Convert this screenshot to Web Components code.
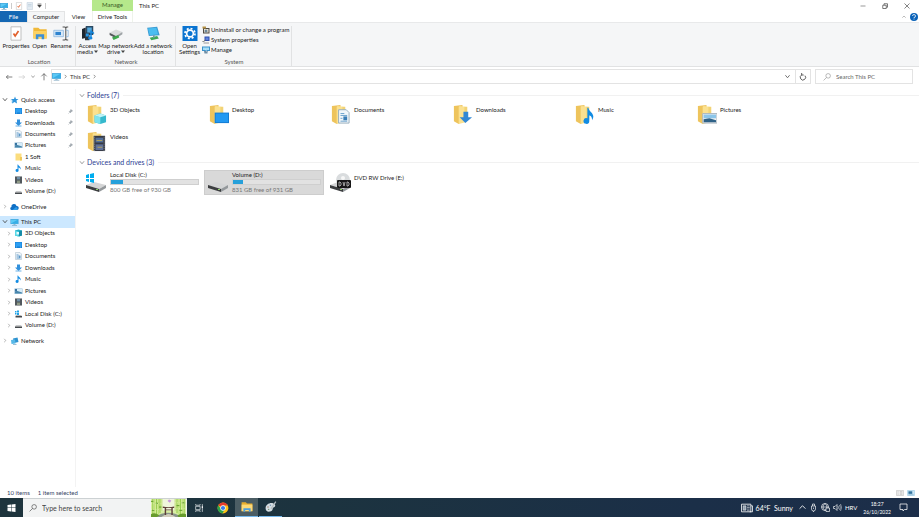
<!DOCTYPE html>
<html lang="en">
<head>
<meta charset="utf-8">
<title>This PC</title>
<style>
html,body{margin:0;height:100%}
body{font:6px/8px Lato,"Open Sans",sans-serif;color:#222;background:#fff}
</style>
</head>
<body>
<explorer-app></explorer-app>
<script>
const folder='<path d="M2 2L11 1V18L7 21L2 18Z" fill="#eec45c"/><path d="M8 2L14 3V19L7 21V3Z" fill="#fbe190"/><path d="M13 3H16V16L13 19Z" fill="#f2d375"/>';
const disk='<path d="M1 13L9 10L21 13L14 17Z" fill="#d4d5d6"/><path d="M1 13L14 17V20L1 16Z" fill="#3c3e40"/><path d="M14 17L21 13V16L14 20Z" fill="#94989b"/><rect x="11" y="17" width="2" height="1" fill="#8ecf6a"/>';
const ICONS={
 pc:[16,16,'<path d="M0 2H16V12H0Z" fill="#3d9bd4"/><path d="M1 3H15V11H1Z" fill="#5cc9f5"/><path d="M1 11L15 3V11Z" fill="#37aee6"/><path d="M6 12H10V14H6Z" fill="#8fb6cc"/><path d="M3 14H13V15H3Z" fill="#5b8fb0"/>'],
 check:[16,18,'<path d="M2 1H14V17H2Z" fill="#fff" stroke="#b5b5b5"/><path d="M5 9L7 12L11 6" fill="none" stroke="#e2612d" stroke-width="2"/>'],
 doc:[16,16,'<path d="M2 1H11L14 4V15H2Z" fill="#eef4f9" stroke="#9db4c5"/><path d="M4 5H8M4 7H12M4 9H7M4 11H7M4 13H12" stroke="#5f9bcb"/><path d="M8 8H12V12H8Z" fill="#5a96c5"/>'],
 sheet:[16,16,'<path d="M2 1H13V15H2Z" fill="#e3ebf2" stroke="#bccbd8"/><path d="M4 5H11M4 8H11" stroke="#aac0d2"/>'],
 openf:[18,18,'<path d="M1 2H7L9 4H17V15H1Z" fill="#f0b93a"/><path d="M1 6H17V15H1Z" fill="#fcd264"/><path d="M4 16V10H14V16H11V13H7V16Z" fill="#3b8fd8"/>'],
 rename:[20,18,'<path d="M1 5H13V13H1Z" fill="#d8e9f8" stroke="#8ab6de"/><path d="M3 7H10V11H3Z" fill="#2e83cf"/><path d="M12 1H15L16 2L17 1H19M16 2V16M12 17H15L16 16L17 17H19" fill="none" stroke="#555" stroke-width="1.300"/><path d="M16 5H19V13H16" fill="none" stroke="#8ab6de"/>'],
 media:[18,20,'<path d="M6 0H16V12H6Z" fill="#2b4a63"/><path d="M8 2H14V9H8Z" fill="#54a9de"/><path d="M1 4L6 2V16L1 17Z" fill="#1e2730"/><path d="M5 9H11V19H5Z" fill="#303940"/><path d="M6 10H10V14H6Z" fill="#2699ea"/><path d="M13 6V16" stroke="#1487df" stroke-width="2"/><ellipse cx="12" cy="16" rx="3" ry="2" fill="#1487df"/><path d="M13 7L17 10" stroke="#1487df" stroke-width="2"/>'],
 mapdrive:[20,18,'<path d="M2 8L10 4L18 7L10 12Z" fill="#d9dbdc"/><path d="M2 8L10 12V15L2 11Z" fill="#54585b"/><path d="M10 12L18 7V10L10 15Z" fill="#9da2a5"/><path d="M5 14L13 11L14 14L7 17Z" fill="#3da74c"/>'],
 addnet:[18,18,'<path d="M2 2L14 1L17 11L4 12Z" fill="#3a9bd2"/><path d="M3 3L13 2L15 10L5 11Z" fill="#4abdf0"/><path d="M5 14L14 12L16 15L7 17Z" fill="#3da757"/><path d="M10 11V14" stroke="#7598a7" stroke-width="2"/>'],
 gear:[18,18,'<path d="M0 0H18V18H0Z" fill="#0a74d1"/><circle cx="9" cy="9" r="4" fill="none" stroke="#fff" stroke-width="2"/><circle cx="9" cy="9" r="6" fill="none" stroke="#fff" stroke-width="2" stroke-dasharray="2.400 2.300"/>'],
 uninstall:[16,16,'<path d="M2 4H15V15H2Z" fill="#4f4a43"/><path d="M4 6H13V13H4Z" fill="#e8e3d5"/><circle cx="8" cy="10" r="3" fill="#6d8696"/><path d="M1 1H8V5H1Z" fill="#b69345"/>'],
 sysprop:[16,16,'<path d="M5 1H15V10H5Z" fill="#2b4fae"/><path d="M7 3H13V8H7Z" fill="#5d80df"/><path d="M3 13H14V15H3Z" fill="#999"/><path d="M1 10L3 12L7 7" stroke="#777" stroke-width="2" fill="none"/>'],
 manage:[16,16,'<path d="M0 1H16V10H0Z" fill="#3b91ca"/><path d="M2 3H14V8H2Z" fill="#a4dcf7"/><path d="M4 10H12L11 15H5Z" fill="#6f8ea5"/><path d="M7 7L11 13" stroke="#fff"/>'],
 star:[16,16,'<path d="M9 1L11 6L16 6L12 9L13 15L8 12L3 15L4 9L1 6L7 6Z" fill="#2c93dc"/><path d="M0 8H4M1 12H4" stroke="#73bced"/>'],
 desktop:[16,16,'<path d="M1 2H15V14H1Z" fill="#1681d8"/><path d="M2 3H14V11H2Z" fill="#2d9ff3"/><path d="M3 12H5M11 12H13" stroke="#a7d8fb"/>'],
 download:[16,16,'<path d="M5 1H11V7H15L8 14L1 7H5Z" fill="#3190dc"/><path d="M2 13H14V15H2Z" fill="#68b0e6"/>'],
 picture:[16,16,'<path d="M0 3H16V14H0Z" fill="#8db3cf"/><path d="M1 4H15V13H1Z" fill="#d6ecf8"/><path d="M1 9L6 8L15 11V13H1Z" fill="#4785ab"/><path d="M1 4H5V9H1Z" fill="#3773a0"/>'],
 soft:[16,16,'<path d="M2 1H14V15H2Z" fill="#fbdd7e"/><path d="M11 8H15V15H11Z" fill="#efc759"/>'],
 music:[16,16,'<path d="M7 1C8 5 14 5 12 11C11 8 9 7 8 7V12A3 3 0 1 1 6 10V1Z" fill="#128ce3"/>'],
 video:[16,16,'<path d="M1 1H15V15H1Z" fill="#42484e"/><path d="M5 2H11V7H5Z" fill="#6f8fa6"/><path d="M5 9H11V14H5Z" fill="#8f9a86"/><path d="M3 2V14M13 2V14" stroke="#c4c8cc" stroke-dasharray="1 1"/>'],
 drive:[16,16,'<path d="M3 8H13L15 11H1Z" fill="#c7c9ca"/><path d="M1 11H15V14H1Z" fill="#45494c"/>'],
 windrive:[16,16,'<path d="M1 2H4V5H1ZM5 1H9V5H5ZM1 6H4V9H1ZM5 6H9V10H5Z" fill="#1fa3e8"/><path d="M3 10H13L15 12H2Z" fill="#bbb"/><path d="M2 12H15V15H2Z" fill="#45494c"/>'],
 cloud:[16,16,'<path d="M3 14A3 3 0 0 1 2 8A5 5 0 0 1 12 6A4 4 0 0 1 13 14Z" fill="#0f6fc5"/><path d="M4 14L11 8A4 4 0 0 1 13 14Z" fill="#2c9be8"/>'],
 cube:[16,16,'<path d="M1 3L8 1L15 3V13L8 15L1 13Z" fill="#25b0c8"/><path d="M1 3L8 5V15L1 13Z" fill="#58d8e6"/><path d="M4 6H9V11H4Z" fill="#e6fbfd"/><path d="M9 5L15 3V13L9 15Z" fill="#168ba8"/>'],
 network:[16,16,'<path d="M5 3L14 1L16 10L7 12Z" fill="#2f93d0"/><path d="M1 6L9 5L10 13L2 14Z" fill="#58b9e8"/><path d="M5 14H12V15H5Z" fill="#3d7fa8"/>'],
 f3d:[22,22,folder+'<path d="M9 12L15 10L21 12V19L15 21L9 19Z" fill="#36b9cd"/><path d="M9 12L15 14V21L9 19Z" fill="#7fe3ee"/><path d="M9 12L15 10L21 12L15 14Z" fill="#bff3f6"/>'],
 fdesktop:[22,22,folder+'<path d="M7 9H22V20H7Z" fill="#147cd3"/><path d="M8 10H21V19H8Z" fill="#2299f2"/>'],
 fdoc:[22,22,folder+'<path d="M9 6H17L20 9V20H9Z" fill="#f1f6fa" stroke="#96adbd"/><path d="M11 10H15M11 12H18M11 18H18M11 15H13" stroke="#6aa1cc"/><path d="M14 13H18V17H14Z" fill="#3b7eb6"/>'],
 fdown:[22,22,folder+'<path d="M12 8H17V14H21L14 20L8 14H12Z" fill="#3187d4"/>'],
 fmusic:[22,22,folder+'<path d="M15 4C16 9 23 10 19 17C19 13 17 12 16 12V18A3 3 0 1 1 14 15V4Z" fill="#128ce3"/>'],
 fpic:[22,22,folder+'<path d="M7 10H22V20H7Z" fill="#f0f2f3" stroke="#aab5bd"/><path d="M8 11H21V15H8Z" fill="#8cc5e9"/><path d="M8 16L14 15L21 17V19H8Z" fill="#2f6288"/>'],
 fvideo:[22,22,folder+'<path d="M8 5H20V21H8Z" fill="#363a44"/><path d="M10 7H18V12H10Z" fill="#526f9a"/><path d="M10 14H18V20H10Z" fill="#5f719a"/><path d="M11 10H17M12 17H17" stroke="#b5a45c"/><path d="M9 6V21M19 6V21" stroke="#8b9099" stroke-dasharray="1 1"/>'],
 dwin:[22,22,disk+'<path d="M1 3L4 2V6H1ZM5 2L9 1V6H5ZM1 7H4V10L1 9ZM5 7H9V11L5 10Z" fill="#00adef"/>'],
 disk:[22,22,disk],
 dvd:[22,22,'<circle cx="14" cy="8" r="7" fill="#d9dcde"/><circle cx="14" cy="6" r="2" fill="#f7f7f7"/>'+disk+'<rect x="8" y="8" width="14" height="8" rx="1" fill="#171717"/><path d="M10 10V14H11L12 13V11L11 10ZM14 10L15 14L16 10M18 10V14H19L20 13V11L19 10Z" fill="none" stroke="#ddd" stroke-width=".7"/>'],
 back:[12,12,'<path d="M11 6H2M5 3L2 6L5 9" fill="none" stroke="#444"/>'],
 fwd:[12,12,'<path d="M1 6H10M7 3L10 6L7 9" fill="none" stroke="#c5c5c5"/>'],
 up:[12,12,'<path d="M6 11V1M2 5L6 1L10 5" fill="none" stroke="#444"/>'],
 down:[12,12,'<path d="M1 3L6 9L11 3" fill="none" stroke="currentColor" stroke-width="2"/>'],
 right:[12,12,'<path d="M4 2L8 6L4 10" fill="none" stroke="currentColor" stroke-width="1.500"/>'],
 chup:[12,12,'<path d="M1 8L6 3L11 8" fill="none" stroke="currentColor" stroke-width="1.500"/>'],
 refresh:[12,12,'<path d="M4 3A4 4 0 1 0 9 4M4 0V3H7" fill="none" stroke="#444" stroke-width="1.300"/>'],
 search:[14,14,'<circle cx="9" cy="5" r="4" fill="none" stroke="currentColor"/><path d="M6 8L1 13" stroke="currentColor"/>'],
 pin:[12,12,'<path d="M7 1L11 5L8 6L6 9L3 6L6 4Z" fill="#a5adb3" stroke="#7c858c"/><path d="M4 8L1 11" stroke="#7c858c"/>'],
 caret:[8,8,'<path d="M0 1H8L4 6Z" fill="#444"/>'],
 qcaret:[8,8,'<path d="M1 0H7M1 3H7L4 7Z" fill="#444" stroke="#444"/>'],
 min:[12,12,'<path d="M1 6H11" stroke="#333"/>'],
 max:[12,12,'<path d="M1.500 4.500H8.500V11H1.500ZM4 4V1.500H11V8.500H9" fill="none" stroke="#333" stroke-width="1.300"/>'],
 close:[12,12,'<path d="M1 1L11 11M11 1L1 11" stroke="#333" stroke-width="1.200"/>'],
 help:[16,16,'<circle cx="8" cy="8" r="8" fill="#0b63b8"/><path d="M5 6A3 3 0 1 1 8 9V10M8 11V13" fill="none" stroke="#fff" stroke-width="1.500"/>'],
 win:[16,16,'<path d="M0 2L7 1V7H0ZM8 1L16 0V7H8ZM0 8H7V15L0 14ZM8 8H16V16L8 15Z" fill="#fff"/>'],
 taskview:[18,18,'<path d="M3 6H11V12H3ZM3 2V4H11V2M3 16V14H11V16M15 2V16" fill="none" stroke="#e5eaec" stroke-width="1.300"/><path d="M14 6H16V9H14Z" fill="#fff"/>'],
 chrome:[20,20,'<circle cx="10" cy="10" r="9" fill="#fbc116"/><path d="M10 10L2 5.500A9 9 0 0 1 18 6H10Z" fill="#e53a2e"/><path d="M2 5.500A9 9 0 0 0 9 19L13 12L10 10L7 12Z" fill="#2ba24c"/><circle cx="10" cy="10" r="4.500" fill="#fff"/><circle cx="10" cy="10" r="3.500" fill="#3b7ded"/>'],
 explorer:[20,18,'<path d="M1 1H8L10 3H19V16H1Z" fill="#e9ad2c"/><path d="M1 5H19V16H1Z" fill="#fdd977"/><path d="M4 17V11H16V17H13V14H7V17Z" fill="#4f9fdd"/>'],
 paint:[20,20,'<path d="M1 12C1 6 8 2 14 4C19 6 17 10 14 11C12 12 14 15 10 17C5 19 1 17 1 12Z" fill="#d3dde2"/><circle cx="5" cy="10" r="1.200" fill="#a8806f"/><circle cx="9" cy="7" r="1.200" fill="#7495b5"/><circle cx="6" cy="14" r="1.200" fill="#77957a"/><path d="M18 1L10 13" stroke="#b3bcc1" stroke-width="2"/>'],
 news:[22,18,'<path d="M1 2H18V16H1ZM18 5H21V16H16" fill="none" stroke="#fff" stroke-width="1.500"/><path d="M4 5H9V13H4Z" fill="#91a0ae"/><path d="M11 5H16M11 8H16M11 11H16M11 14H16M4 5H9V13H4Z" fill="none" stroke="#fff"/>'],
 usb:[14,18,'<path d="M3 6H11V12A4 4 0 0 1 3 12ZM5 6V2H9V6M7 9V12M7 16V18" fill="none" stroke="#fff" stroke-width="1.300"/>'],
 globe:[18,18,'<circle cx="8" cy="8" r="7" fill="none" stroke="#fff" stroke-width="1.400"/><path d="M1 8H15M8 1C3 5 3 11 8 15C13 11 13 5 8 1" fill="none" stroke="#fff" stroke-width="1.200"/><path d="M10 10H17V17H10Z" fill="#1d3049" stroke="#fff" stroke-width="1.300"/>'],
 sound:[18,16,'<path d="M1 6H4L8 2V14L4 10H1Z" fill="none" stroke="#fff" stroke-width="1.300"/><path d="M10 5Q12 8 10 11M13 3Q16 8 13 13M15 1Q19 8 15 15" fill="none" stroke="#fff"/>'],
 note:[18,18,'<path d="M2 2H16V13H11L8 16V13H2Z" fill="none" stroke="#fff" stroke-width="1.500"/>'],
 details:[18,14,'<path d="M1 1H17V13H1Z" fill="#fff" stroke="#999"/><path d="M3 4H6M3 7H6M3 10H6M8 4H15M8 7H15M8 10H15" stroke="#777"/>'],
 tiles:[18,14,'<path d="M1 1H17V13H1Z" fill="#cfe8f7" stroke="#74b5dc"/><path d="M3 3H12V9H3Z" fill="#32749f"/><path d="M3 11H15" stroke="#4a86ac"/>'],
 garden:[74,38,'<path d="M0 0H74V38H0Z" fill="#d9efa4"/><path d="M22 0H52V24H22Z" fill="#eff5dc"/><path d="M4 0V38M12 0V34M19 0V30M55 0V30M62 0V34M70 0V38" stroke="#8cc63a" stroke-width="2"/><path d="M8 0V38M16 0V33M23 0V25M51 0V25M59 0V33M66 0V38" stroke="#b9dd6b" stroke-width="2"/><path d="M0 5H5M10 9H15M17 17H22M54 14H60M65 8H72M2 24H7M60 24H66" stroke="#5f9a28" stroke-width="2"/><path d="M0 10H30M45 8H74M0 22H20M54 20H74" stroke="#f2fad2" stroke-dasharray="2 3"/><path d="M8 38Q36 20 66 38Z" fill="#89958a"/><path d="M22 38Q37 25 52 38Z" fill="#d1cdbb"/><path d="M25 16Q37 19 49 16V19H25ZM29 22H46V24H29ZM29 19H32V34H29ZM43 19H46V34H43Z" fill="#5e3f38"/><path d="M35 4L38 1L43 3L40 8Z" fill="#c796dd"/><path d="M0 32Q8 27 18 35L12 38H0ZM56 35Q65 28 74 32V38H58Z" fill="#679b2c"/>']
};
const define=(tag,render)=>customElements.define(tag,class extends HTMLElement{
  constructor(){super();this.attachShadow({mode:'open'})}
  connectedCallback(){if(!this.shadowRoot.childNodes.length)this.shadowRoot.innerHTML=`<style>*{box-sizing:border-box}button,input{font:inherit;color:inherit;border:0;background:none;margin:0;padding:0}button,a{text-decoration:none;color:inherit;white-space:nowrap}</style>`+render(this,n=>this.getAttribute(n)||'')}
});
define('ui-icon',(el,a)=>{const [w,h,p]=ICONS[a('name')];return `<style>:host{display:inline-flex;width:8px;height:8px;flex:none}svg{width:100%;height:100%;display:block}</style><svg viewBox="0 0 ${w} ${h}" aria-hidden="true">${p}</svg>`});

define('title-bar',()=>`<style>
:host{display:block}.row{display:flex;height:11px;align-items:stretch}
.quick{width:92px;display:flex;align-items:center;gap:3px}.quick i{width:1px;height:6px;background:#ccc}
.quick ui-icon{width:8px}.quick .c{width:5px;height:5px}
.manage{width:41px;background:#b5e88b;text-align:center;line-height:10px;color:#3b5b25}
h1{font:inherit;margin:0;padding-left:6px;line-height:11px;flex:1}
.win{display:flex;gap:16px;padding-right:9px;align-items:center}.win ui-icon{width:6px;height:6px}.win button{display:flex}
.tabs button{text-align:center}.file{width:27px;background:#1467b3;color:#fff}.computer{width:38px;background:#f5f6f7;border:1px solid #e3e4e5;border-bottom:0}
.view{width:27px}.tools{width:41px;border-left:1px solid #eef3ea;border-right:1px solid #eef3ea}
.end{margin-left:auto;display:flex;align-items:center;gap:4px;padding-right:1px;color:#777}.end ui-icon{width:8px}.end .u{width:4px}
</style>
<div class="row"><div class="quick"><ui-icon name="pc"></ui-icon><i></i><ui-icon name="check"></ui-icon><ui-icon name="sheet"></ui-icon><ui-icon class="c" name="qcaret"></ui-icon><i></i></div><div class="manage">Manage</div><h1>This PC</h1>
<div class="win"><button aria-label="Minimize"><ui-icon name="min"></ui-icon></button><button aria-label="Restore"><ui-icon name="max"></ui-icon></button><button aria-label="Close"><ui-icon name="close"></ui-icon></button></div></div>
<div class="row tabs"><button class="file">File</button><button class="computer">Computer</button><button class="view">View</button><button class="tools">Drive Tools</button><div class="end"><ui-icon class="u" name="chup"></ui-icon><ui-icon name="help"></ui-icon></div></div>`);

define('ribbon-group',(el,a)=>`<style>:host{display:flex;flex-direction:column;border-right:1px solid #e1e2e3}
.b{display:flex;flex:1;align-items:flex-start}.l{text-align:center;color:#555}</style><div class="b"><slot></slot></div><div class="l">${a('label')}</div>`);
define('ribbon-button',(el,a)=>`<style>:host{display:block}button{width:100%;display:flex;flex-direction:column;align-items:center;gap:2px;line-height:6px}
ui-icon{width:16px;height:15px}.m{width:4px;height:4px;display:inline-block;margin-left:1px}</style><button><ui-icon name="${a('icon')}"></ui-icon><span>${a('label')}${a('second')?'<br>'+a('second'):''}${el.hasAttribute('menu')?'<ui-icon class="m" name="caret"></ui-icon>':''}</span></button>`);
define('ribbon-link',(el,a)=>`<style>:host{display:block}button{display:flex;align-items:center;gap:1px}</style><button><ui-icon name="${a('icon')}"></ui-icon>${a('label')}</button>`);
define('ribbon-bar',()=>`<style>:host{display:flex;background:#f5f6f7;border-bottom:1px solid #e1e2e3;height:45px;padding-top:3px;border-top:1px solid #e8e9ea}
.loc{width:76px;padding-left:3px}.net{width:100px;padding-left:1px}.sys{width:116px;padding-left:1px}
.w1{width:26px}.w2{width:21px}.w3{width:22px}.w4{width:21px}.w5{width:36px}.w6{width:38px}.w7{width:25px}.links{display:grid;gap:2px}</style>
<ribbon-group class="loc" label="Location"><ribbon-button class="w1" icon="check" label="Properties"></ribbon-button><ribbon-button class="w2" icon="openf" label="Open"></ribbon-button><ribbon-button class="w3" icon="rename" label="Rename"></ribbon-button></ribbon-group>
<ribbon-group class="net" label="Network"><ribbon-button class="w4" icon="media" label="Access" second="media" menu></ribbon-button><ribbon-button class="w5" icon="mapdrive" label="Map network" second="drive" menu></ribbon-button><ribbon-button class="w6" icon="addnet" label="Add a network" second="location"></ribbon-button></ribbon-group>
<ribbon-group class="sys" label="System"><ribbon-button class="w7" icon="gear" label="Open" second="Settings"></ribbon-button><div class="links"><ribbon-link icon="uninstall" label="Uninstall or change a program"></ribbon-link><ribbon-link icon="sysprop" label="System properties"></ribbon-link><ribbon-link icon="manage" label="Manage"></ribbon-link></div></ribbon-group>`);

define('address-bar',()=>`<style>:host{display:flex;align-items:center;padding:2px 6px 2px 5px;color:#555}
.nav{display:flex;align-items:center;gap:5px;width:46px}.nav button{display:flex}.nav .s{width:4px;height:5px;color:#777}ui-icon{width:8px;height:8px}
.path{flex:1;display:flex;align-items:center;border:1px solid #e3e3e3;height:15px;gap:2px}.path .s{width:5px;height:5px}.path .pc{width:9px;height:9px}
a{color:#333}.end{margin-left:auto;display:flex;align-items:center}.end button{width:15px;height:13px;display:grid;place-items:center}.end .r{border-left:1px solid #e3e3e3}
.search{display:flex;align-items:center;gap:5px;width:98px;height:15px;margin-left:4px;border:1px solid #e3e3e3;padding-left:7px;color:#888}input{min-width:0;flex:1;outline:0}input::placeholder{color:#666;opacity:1}</style>
<div class="nav"><button aria-label="Back"><ui-icon name="back"></ui-icon></button><button aria-label="Forward"><ui-icon name="fwd"></ui-icon></button><button aria-label="Recent"><ui-icon class="s" name="down"></ui-icon></button><button aria-label="Up"><ui-icon name="up"></ui-icon></button></div>
<div class="path"><ui-icon class="pc" name="pc"></ui-icon><ui-icon class="s" name="right"></ui-icon><a href="#">This PC</a><ui-icon class="s" name="right"></ui-icon><div class="end"><button aria-label="Locations"><ui-icon class="s" name="down"></ui-icon></button><button class="r" aria-label="Refresh"><ui-icon name="refresh"></ui-icon></button></div></div>
<label class="search"><ui-icon name="search"></ui-icon><input type="text" aria-label="Search This PC" placeholder="Search This PC"></label>`);

define('tree-item',(el,a)=>`<style>:host{display:flex}:host([selected]){background:#cce8ff}
a{flex:1;display:flex;align-items:center;padding:0 2px;gap:2px}:host([child]) a{padding-left:6px}ui-icon{width:9px}.s{width:6px;height:5px;color:#888}:host([open]) .s{color:#444}.g{width:6px}.p{margin-left:auto;width:5px;height:5px}</style>
<a href="#">${a('arrow')?`<ui-icon class="s" name="${a('arrow')}"></ui-icon>`:'<span class="g"></span>'}<ui-icon name="${a('icon')}"></ui-icon><span><slot></slot></span>${el.hasAttribute('pinned')?'<ui-icon class="p" name="pin"></ui-icon>':''}</a>`);
const item=([i,t,o=''])=>`<tree-item child icon="${i}" ${o}>${t}</tree-item>`;
define('nav-tree',()=>`<style>:host{display:flex;flex-direction:column;gap:4px;width:75px;flex:none;padding-top:5px}nav{display:grid;grid-auto-rows:1fr;min-height:11px}.q{height:103px}.t{height:115px}</style>
<nav class="q" aria-label="Quick access"><tree-item arrow="down" open icon="star">Quick access</tree-item>${[['desktop','Desktop','pinned'],['download','Downloads','pinned'],['doc','Documents','pinned'],['picture','Pictures','pinned'],['soft','1 Soft'],['music','Music'],['video','Videos'],['drive','Volume (D:)']].map(item).join('')}</nav>
<nav><tree-item arrow="right" icon="cloud">OneDrive</tree-item></nav>
<nav class="t" aria-label="This PC"><tree-item selected arrow="down" open icon="pc">This PC</tree-item>${[['cube','3D Objects'],['desktop','Desktop'],['doc','Documents'],['download','Downloads'],['music','Music'],['picture','Pictures'],['video','Videos'],['windrive','Local Disk (C:)'],['drive','Volume (D:)']].map(x=>item([...x,'arrow="right"'])).join('')}</nav>
<nav><tree-item arrow="right" icon="network">Network</tree-item></nav>`);

define('item-group',(el,a)=>`<style>:host{display:block}h2{font:inherit;font-size:7px;line-height:9px;margin:0;display:flex;align-items:center;gap:2px;color:#2c3c92;padding-left:1px}h2 ui-icon{width:6px;height:5px;color:#888}h2:after{content:"";flex:1;height:1px;margin-left:2px;background:#f1f1f1}
div{display:grid;grid-template-columns:repeat(auto-fill,120px);gap:3px 2px;padding:3px 0 0 4px}</style><h2><ui-icon name="down"></ui-icon>${a('label')}</h2><div><slot></slot></div>`);
define('folder-tile',(el,a)=>`<style>:host{display:block}a{display:flex;gap:3px;padding:1px 0 0 4px;height:24px}ui-icon{width:21px;height:21px}span{padding-top:2px}</style><a href="#"><ui-icon name="${a('icon')}"></ui-icon><span><slot></slot></span></a>`);
define('drive-tile',(el,a)=>`<style>:host{display:block;border:1px solid transparent;height:25px}:host([selected]){background:#d9d9d9;border-color:#cdcdcd}
a{display:flex;gap:3px;padding:0 2px 0 2px;height:100%}ui-icon{width:22px;height:22px;align-self:center}.i{flex:1}.bar{height:6px;background:#e2e2e2;border:1px solid #cfcfcf;margin-bottom:1px}.bar i{display:block;height:100%;width:14%;background:#26a0da}:host([selected]) .fill{width:11%}.f{color:#777}.solo{padding-top:3px}</style>
<a href="#"><ui-icon name="${a('icon')}"></ui-icon><span class="i ${a('free')?'':'solo'}"><slot></slot>${a('free')?`<div class="bar"><i class="fill"></i></div><div class="f">${a('free')}</div>`:''}</span></a>`);
define('file-view',()=>`<style>:host{display:flex;flex-direction:column;gap:4px;flex:1;min-width:0;padding:2px 0 0 2px;border-left:1px solid #f3f3f3}</style>
<item-group label="Folders (7)">${[['f3d','3D Objects'],['fdesktop','Desktop'],['fdoc','Documents'],['fdown','Downloads'],['fmusic','Music'],['fpic','Pictures'],['fvideo','Videos']].map(([i,t])=>`<folder-tile icon="${i}">${t}</folder-tile>`).join('')}</item-group>
<item-group label="Devices and drives (3)"><drive-tile icon="dwin" free="800 GB free of 930 GB">Local Disk (C:)</drive-tile><drive-tile selected icon="disk" free="831 GB free of 931 GB">Volume (D:)</drive-tile><drive-tile icon="dvd">DVD RW Drive (E:)</drive-tile></item-group>`);

define('status-bar',()=>`<style>:host{display:flex;gap:8px;align-items:center;height:11px;padding:0 4px 0 7px;color:#334164}.v{margin-left:auto;display:flex;gap:3px}.v button{display:flex}ui-icon{width:8px;height:6px}</style><span>10 items</span><span>1 item selected</span><div class="v"><button aria-label="Details"><ui-icon name="details"></ui-icon></button><button aria-label="Large icons"><ui-icon name="tiles"></ui-icon></button></div>`);
define('task-bar',()=>`<style>:host{display:flex;height:19px;background:linear-gradient(90deg,#1e343d,#1c333f 35%,#1b2f48 75%,#1c2e49);color:#fff}
button{display:grid;place-items:center;width:23px}.win ui-icon{width:9px}
label{display:flex;align-items:center;width:164px;background:#f2f3f3;color:#333;padding-left:6px;gap:5px;font-size:7px;border-top:1px solid #ccd1d3}label .s{width:8px}label .g{width:37px;height:18px}input{flex:1;min-width:0;outline:0}input::placeholder{color:#444;opacity:1}
.app ui-icon{width:12px;height:12px}.app.t ui-icon{width:10px;height:10px}.on{background:#4b5d64}.run{border-bottom:1px solid #76b9ed}.apps{display:flex;gap:1px}
.tray{margin-left:auto;display:flex;align-items:center;gap:3px}.tray ui-icon{width:9px;height:9px}.w{display:flex;align-items:center;font-size:7px;width:auto}.tray .w ui-icon{width:12px;height:10px}.tray .c{width:7px;height:7px;margin-left:3px}
time{font-size:5px;line-height:8px;text-align:center;margin:0 5px 0 3px}.tray .n{margin-right:11px}</style>
<button class="win" aria-label="Start"><ui-icon name="win"></ui-icon></button><label><ui-icon class="s" name="search"></ui-icon><input type="text" aria-label="Type here to search" placeholder="Type here to search"><ui-icon class="g" name="garden"></ui-icon></label>
<div class="apps"><button class="app t" aria-label="Task View"><ui-icon name="taskview"></ui-icon></button><button class="app" aria-label="Chrome"><ui-icon name="chrome"></ui-icon></button><button class="app on run" aria-label="File Explorer"><ui-icon name="explorer"></ui-icon></button><button class="app run" aria-label="Paint"><ui-icon name="paint"></ui-icon></button></div>
<div class="tray"><button class="w" aria-label="News"><ui-icon name="news"></ui-icon></button><span class="w">64°F&nbsp; Sunny</span><ui-icon class="c" name="chup"></ui-icon><ui-icon name="usb"></ui-icon><ui-icon name="globe"></ui-icon><ui-icon name="sound"></ui-icon><span>HRV</span><time>18:27<br>26/10/2022</time><ui-icon class="n" name="note"></ui-icon></div>`);
define('explorer-app',()=>`<style>:host{display:flex;flex-direction:column;min-height:100vh}main{flex:1;display:flex;padding-top:3px}</style><title-bar></title-bar><ribbon-bar></ribbon-bar><address-bar></address-bar><main><nav-tree></nav-tree><file-view></file-view></main><status-bar></status-bar><task-bar></task-bar>`);
</script>
</body>
</html>
